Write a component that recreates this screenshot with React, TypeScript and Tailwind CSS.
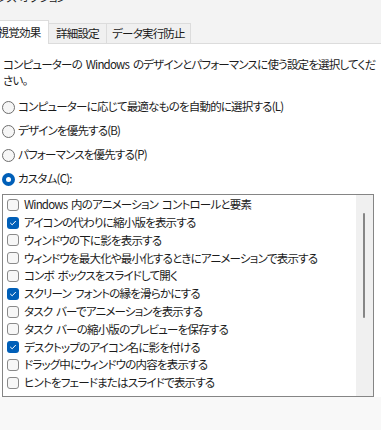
import React from 'react';

const rows: { label: string; checked: boolean }[] = [
  { label: 'Windows 内のアニメーション コントロールと要素', checked: false },
  { label: 'アイコンの代わりに縮小版を表示する', checked: true },
  { label: 'ウィンドウの下に影を表示する', checked: false },
  { label: 'ウィンドウを最大化や最小化するときにアニメーションで表示する', checked: false },
  { label: 'コンボ ボックスをスライドして開く', checked: false },
  { label: 'スクリーン フォントの縁を滑らかにする', checked: true },
  { label: 'タスク バーでアニメーションを表示する', checked: false },
  { label: 'タスク バーの縮小版のプレビューを保存する', checked: false },
  { label: 'デスクトップのアイコン名に影を付ける', checked: true },
  { label: 'ドラッグ中にウィンドウの内容を表示する', checked: false },
  { label: 'ヒントをフェードまたはスライドで表示する', checked: false },
];

const radios = [
  { label: 'コンピューターに応じて最適なものを自動的に選択する(L)', checked: false },
  { label: 'デザインを優先する(B)', checked: false },
  { label: 'パフォーマンスを優先する(P)', checked: false },
  { label: 'カスタム(C):', checked: true },
];

const Radio = ({ checked }: { checked: boolean }) =>
  checked ? (
    <span className="w-[13px] h-[13px] rounded-full bg-[#005fb8] flex items-center justify-center shrink-0">
      <span className="w-[5px] h-[5px] rounded-full bg-white" />
    </span>
  ) : (
    <span className="w-[13px] h-[13px] rounded-full border border-[#6e6e6e] bg-[#f6f6f6] shrink-0" />
  );

const Check = ({ checked }: { checked: boolean }) =>
  checked ? (
    <span className="w-[12px] h-[12px] rounded-[3px] bg-[#005fb8] flex items-center justify-center shrink-0">
      <svg width="8" height="8" viewBox="0 0 8 8" fill="none">
        <path d="M1.5 4.2 L3.2 5.8 L6.5 2.3" stroke="white" strokeWidth="1" strokeLinecap="round" strokeLinejoin="round" />
      </svg>
    </span>
  ) : (
    <span className="w-[12px] h-[12px] rounded-[3px] border border-[#8a8a8a] bg-[#f7f7f7] shrink-0" />
  );

export default function App() {
  return (
    <div className="w-[381px] h-[430px] overflow-hidden bg-[#f3f3f3] text-[11.5px] tracking-[-0.8px] [word-spacing:2px] text-[#1b1b1b] font-['Noto_Sans_CJK_JP',sans-serif] [font-feature-settings:'palt']">
      {/* title bar, mostly cut off */}
      <div className="h-[20px] overflow-hidden">
        <p className="-mt-[9px] -ml-[50px] leading-[12px] whitespace-nowrap">パフォーマンス オプション</p>
      </div>

      {/* tabs */}
      <div className="h-[24px] flex items-end border-b border-[#dcdcdc]">
        <div className="relative z-10 -mb-px -ml-[11px] w-[60px] h-[24px] bg-white border border-b-0 border-[#dcdcdc] flex items-center justify-center pt-[1px]">
          視覚効果
        </div>
        <div className="w-[58px] h-[20px] bg-[#f0f0f0] border border-b-0 border-l-0 border-[#dcdcdc] flex items-center justify-center">
          詳細設定
        </div>
        <div className="w-[84px] h-[20px] bg-[#f0f0f0] border border-b-0 border-l-0 border-[#dcdcdc] flex items-center justify-center">
          データ実行防止
        </div>
      </div>

      {/* panel */}
      <div className="bg-white h-[353px] pt-[12px]">
        <p className="pl-[3px] leading-[16px] whitespace-nowrap">
          コンピューターの Windows のデザインとパフォーマンスに使う設定を選択してくだ
          <br />
          さい。
        </p>

        <div className="mt-[7px]">
          {radios.map(r => (
            <div key={r.label} className="h-[24px] flex items-center pl-[2px] gap-[3px] whitespace-nowrap">
              <Radio checked={r.checked} />
              <span>{r.label}</span>
            </div>
          ))}
        </div>

        <div className="mt-[3px] ml-[2px] w-[372px] h-[203px] border border-[#858585] bg-white flex overflow-hidden">
          <div className="flex-1 pt-[1px] overflow-hidden">
            {rows.map(r => (
              <div key={r.label} className="h-[17.8px] flex items-center pl-[4px] gap-[5px] whitespace-nowrap">
                <Check checked={r.checked} />
                <span>{r.label}</span>
              </div>
            ))}
          </div>
          <div className="w-[17px] bg-[#f0f0f0] pt-[18px] pl-[7px]">
            <div className="w-[2px] h-[105px] rounded-full bg-[#868686]" />
          </div>
        </div>
      </div>
      <div className="bg-[#f8f8f8] h-full" />
    </div>
  );
}
